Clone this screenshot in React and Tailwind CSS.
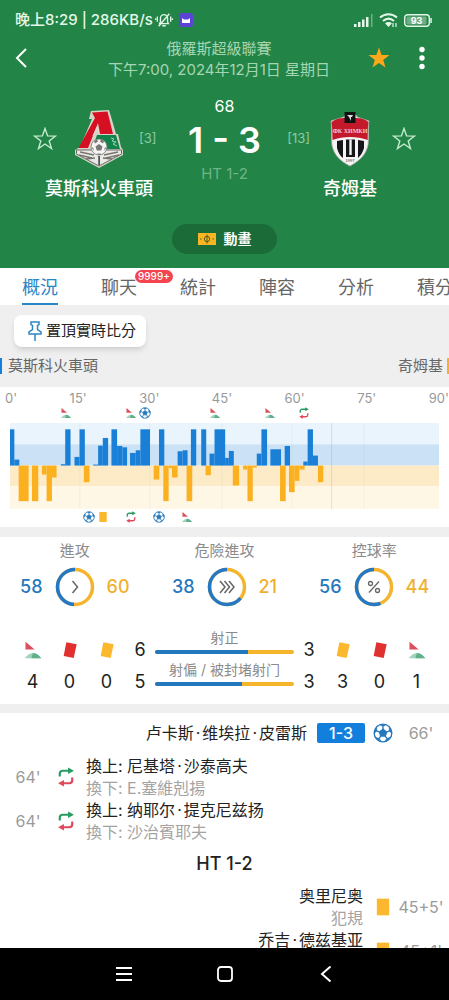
import React from "react";

// bar = [x, width, height], positive heights are the home side
const momentum = [
  [0, 13, 109], [13, 15, 18], [153, 13, 4], [166, 16, 109], [194, 15, 26],
  [209, 16, 109], [250, 15, 3], [265, 14, 60], [279, 16, 83], [305, 17, 109],
  [322, 16, 59], [338, 14, 55], [361, 17, 38], [378, 14, 46], [392, 29, 109],
  [448, 16, 109], [504, 15, 43], [519, 15, 46], [544, 16, 109], [575, 15, 109],
  [600, 15, 36], [615, 32, 109], [647, 11, 23], [658, 15, 44], [742, 14, 36],
  [756, 17, 109], [783, 32, 49], [826, 16, 59], [882, 13, 12], [895, 16, 109],
  [911, 15, 30],
  [26, 30, -107], [66, 19, -107], [96, 14, -27], [110, 16, -107], [126, 14, -36],
  [222, 17, -50], [432, 17, -42], [461, 16, -107], [477, 10, -8], [487, 17, -36],
  [531, 17, -107], [588, 16, -29], [670, 19, -60], [701, 13, -12], [714, 16, -107],
  [730, 12, -6], [812, 17, -107], [839, 17, -80], [856, 14, -46], [870, 16, -12],
  [926, 16, -50],
];

const minutes = ["0'", "15'", "30'", "45'", "60'", "75'", "90'"];

const homeMarks = [
  { at: 13, type: "corner" },
  { at: 28.1, type: "corner" },
  { at: 31.5, type: "goal" },
  { at: 47.7, type: "corner" },
  { at: 60.7, type: "corner" },
  { at: 68.5, type: "sub" },
];

const awayMarks = [
  { at: 18.4, type: "goal" },
  { at: 21.6, type: "yellow" },
  { at: 28.1, type: "sub" },
  { at: 34.8, type: "goal" },
  { at: 41.2, type: "corner" },
];

const tabs = ["概況", "聊天", "統計", "陣容", "分析", "積分"];

const Ball = ({ className }) => (
  <svg viewBox="0 0 24 24" className={className} fill="none" stroke="#2478bd" strokeWidth="1.6">
    <circle cx="12" cy="12" r="10.6" fill="#fff" />
    <path d="M12 7.6l4.3 3.1-1.6 5H9.3l-1.6-5z" fill="#2478bd" />
    <path d="M12 7.6V4.5M16.3 10.7l3-1M14.7 15.7l2 2.7M9.3 15.7l-2 2.7M7.7 10.7l-3-1" />
    <path
      d="M8.4 2.2L12 4.6l3.6-2.4zM19.2 9.6l.4-4.4 3 4.8-.3 2.4zM16.6 18.3l4.2-1-4 3.7-2.6 1zM7.4 18.3l-4.2-1 4 3.7 2.6 1zM4.8 9.6l-.4-4.4-3 4.8.3 2.4z"
      fill="#2478bd"
      strokeWidth="0.5"
    />
  </svg>
);

const Corner = ({ className }) => (
  <svg viewBox="0 0 24 24" className={className}>
    <path d="M3 2l11 9.500H3z" fill="#dd4f5c" />
    <path d="M2 22c3-4 6-6.500 10-6.500S19 18 22 22z" fill="#9fd3bb" />
    <path d="M10 22l2-6.500C16 15.500 19 18 22 22z" fill="#5fb08c" />
  </svg>
);

const Sub = ({ className }) => (
  <svg viewBox="0 0 24 24" className={className} fill="none" strokeWidth="2.600">
    <path d="M4.500 11.500V8c0-2 1.500-3.500 3.500-3.500h8" stroke="#279c62" />
    <path d="M14.500 0.500l7 4-7 4z" fill="#279c62" />
    <path d="M19.500 12.500V16c0 2-1.500 3.500-3.500 3.500H8" stroke="#e0485b" />
    <path d="M9.500 15.500l-7 4 7 4z" fill="#e0485b" />
  </svg>
);

const Card = ({ className, color = "#fbb82f", tilt }) => (
  <svg viewBox="0 0 24 24" className={className}>
    <path d={tilt ? "M7.600 2.800L20 5.200 16.400 21.600 4.400 19.200z" : "M4.600 2h14.800v20H4.600z"} fill={color} />
  </svg>
);

const EventIcon = ({ type, className }) => {
  if (type === "goal") return <Ball className={className} />;
  if (type === "corner") return <Corner className={className} />;
  if (type === "sub") return <Sub className={className} />;
  return <Card className={className} />;
};

const StarIcon = ({ className, filled }) => (
  <svg
    viewBox="0 0 24 24"
    className={className}
    fill={filled ? "#fda71b" : "none"}
    stroke={filled ? "none" : "#c5ebd0"}
    strokeWidth="1.400"
  >
    <path d="M12 1.500l2.600 7.400 7.900.2-6.300 4.800 2.300 7.600L12 17l-6.500 4.500 2.300-7.600L1.500 9.100l7.900-.2z" />
  </svg>
);

const LokomotivCrest = () => (
  <svg viewBox="0 0 48 58" className="h-[58px] w-12">
    <path d="M16 1l18-1 3 10 4 14h2l3 13 2 3v5L24 58 0 45v-5l5-3 12-28h-3z" fill="#d8d3c8" />
    <path d="M1.500 40h45v4L24 56 1.500 44z" fill="#e9e9e6" stroke="#6b6b66" strokeWidth="1" />
    <path d="M5 42l14 3M4 45l13 3M43 42l-14 3M44 45l-13 3M11 49l9-1M37 49l-9-1" stroke="#77736d" strokeWidth="1.300" />
    <path d="M22 25h19l4 14H17z" fill="#11834a" />
    <path d="M36 28l3 1-2 2 4 1-3 2 4 2" stroke="#9fd3b5" strokeWidth="1" fill="none" />
    <path d="M17 2.500L32.500 1.500 38 24H25l-2-11-10 25H3.500L20 8z" fill="#d70f22" />
    <path d="M18 26l4-9 2 6" stroke="#f0d5d5" strokeWidth="1" fill="none" />
    <circle cx="24" cy="37" r="8" fill="#f4f4f2" stroke="#777" strokeWidth="0.800" />
    <path d="M24 34l3.500 2.400-1.300 4h-4.400l-1.300-4zM19 31l3-1.500 1 2-3 2zM29 31l-3-1.500-1 2 3 2zM16.500 37l2 1v3zM31.500 37l-2 1v3zM22 43.500h4l-1 1.300h-2z" fill="#777" />
    <path d="M23.300 46h1.600v9h-1.600z" fill="#444" />
  </svg>
);

const KhimkiCrest = () => (
  <svg viewBox="0 0 40 56" className="h-[56px] w-10">
    <path d="M1 10l13-4 1-2h11l1 2 12 4c-1 6 0 14-1 24-2 10-9 16-18 21C10 50 4 44 2 34 1 24 2 16 1 10z" fill="#f5f3f3" stroke="#b9b3ae" strokeWidth="0.800" />
    <path d="M1.500 11C8 6 14 7 20 7s13-1 18.500 4c-1 6-.500 12-.800 18C27 25 13 25 2.500 29c-.300-6 0-12-1-18z" fill="#c4182b" />
    <path d="M7 30l6-1v18c-3-2-5-6-6-10zM16 28.500h9V46h-9zM28 29l6 1v7c-1 4-3 7-6 10z" fill="#15151a" />
    <path d="M19.300 28.500h2.400V44h-2.400z" fill="#f5f3f3" />
    <path d="M14.500 1h11v11h-11z" fill="#111" />
    <path d="M17 4h6l-1 2h-1v4l-2-4z" fill="#ddd" />
    <text x="20" y="22" textAnchor="middle" fontSize="6" fontFamily="Liberation Serif, serif" fontWeight="700" fill="#f2c9c9">
      ФК ХИМКИ
    </text>
    <text x="20" y="51" textAnchor="middle" fontSize="4" fontFamily="Liberation Sans, sans-serif" fill="#333">
      1997
    </text>
  </svg>
);

const Gauge = ({ title, home, away, share, children }) => (
  <div className="flex flex-col items-center">
    <h3 className="text-[15px] leading-5 text-[#8b8b8b]">{title}</h3>
    <div className="mt-1.5 flex items-center justify-center gap-3 text-lg font-medium">
      <span className="text-[#2478bd]">{home}</span>
      <svg viewBox="0 0 40 40" className="size-10" fill="none">
        <circle cx="20" cy="20" r="17.500" stroke="#f4b42c" strokeWidth="3.500" />
        <circle
          cx="20"
          cy="20"
          r="17.500"
          stroke="#2478c4"
          strokeWidth="3.500"
          pathLength="100"
          strokeDasharray={`${share} 100`}
          transform="translate(40 0) scale(-1 1) rotate(-90 20 20)"
        />
        {children}
      </svg>
      <span className="text-[#f0b030]">{away}</span>
    </div>
  </div>
);

const StatColumn = ({ icon, value }) => (
  <div className="flex w-[37px] flex-col items-center gap-3">
    {icon}
    <span className="text-lg leading-5">{value}</span>
  </div>
);

const ShotBar = ({ label, share }) => (
  <div className="flex h-8 flex-col justify-between pt-0.5 pb-1.5">
    <span className="text-center text-sm leading-4 whitespace-nowrap text-[#8b8b8b]">{label}</span>
    <div className="flex h-1 overflow-hidden rounded-full bg-[#f4b42c]">
      <div className="bg-[#2478bd]" style={{ width: `${share}%` }} />
    </div>
  </div>
);

const PlayerName = ({ name }) =>
  name.split("·").map((part, idx) => (
    <React.Fragment key={idx}>
      {idx > 0 && <span className="mx-0.5">·</span>}
      {part}
    </React.Fragment>
  ));

const EventRow = ({ time, type, title, note, away, score }) => (
  <li className={away ? "flex shrink-0 flex-row-reverse items-center" : "flex shrink-0 items-center"}>
    <span className="w-14 text-center text-base whitespace-nowrap text-[#9b9b9b]">{time}</span>
    <EventIcon type={type} className="size-5 shrink-0" />
    {score && (
      <span className="mr-2 flex h-5 w-12 items-center justify-center rounded-xs bg-[#127fdc] text-base font-medium text-white">
        {score}
      </span>
    )}
    <div className={away ? "mr-2.5 text-right text-base leading-[22px]" : "ml-2.5 text-base leading-[22px]"}>
      <p className="text-[#222]">
        <PlayerName name={title} />
      </p>
      {note && <p className="text-[#a3a3a3]">{note}</p>}
    </div>
  </li>
);

const TimelineMarks = ({ marks }) => (
  <div className="relative h-[18px]">
    {marks.map((mark) => (
      <span key={mark.at} className="absolute top-0.5 -translate-x-1/2" style={{ left: `${mark.at}%` }}>
        <EventIcon type={mark.type} className="size-3" />
      </span>
    ))}
  </div>
);

const Header = () => (
  <header className="shrink-0 bg-[#238447] pb-3.5 text-white">
    <div className="flex h-9 items-center pt-1 pr-[17px] pl-[15px] text-[#e3f8e9]">
      <span className="text-[15px] font-medium">晚上8:29 | 286KB/s</span>
      <svg viewBox="0 0 20 18" className="ml-0.5 h-4 w-[18px]" fill="none" stroke="currentColor" strokeWidth="1.500">
        <path d="M5 13h10l-1-2V7a4 4 0 0 0-8 0v4zM8 15.500h4M4 16L16 2M2.500 5v6M17.500 5v6M.500 7v2M19.500 7v2" />
      </svg>
      <svg viewBox="0 0 14 14" className="ml-1.5 size-3.5">
        <rect width="14" height="14" rx="3" fill="#5a43d6" />
        <path d="M3 5l2 1.500h4L11 5v5H3z" fill="#fff" />
      </svg>
      <div className="ml-auto flex items-center gap-1.5">
        <svg viewBox="0 0 19 13" className="h-[13px] w-[19px]" fill="currentColor">
          <path d="M0 10h2.500v3H0zM4 8h2.500v5H4zM8 5.500h2.500V13H8zM12 3h2.500v10H12z" />
          <path d="M17 0h1.500v13H17z" opacity="0.4" />
        </svg>
        <svg viewBox="0 0 19 14" className="h-3.5 w-[19px]" fill="none" stroke="currentColor" strokeWidth="2">
          <path d="M1 4.500c5-4.500 12-4.500 17 0M4 8c3.500-3 7.500-3 11 0" />
          <path d="M9.500 14L6 10.300c2-1.800 5-1.800 7 0z" fill="currentColor" stroke="none" />
          <path d="M14 10v4M17 10v4" strokeWidth="1.200" />
        </svg>
        <svg viewBox="0 0 28 13" className="h-[13px] w-7">
          <rect x="0.700" y="0.700" width="24.600" height="11.600" rx="3" fill="none" stroke="currentColor" strokeWidth="1.400" />
          <rect x="2.500" y="2.500" width="20" height="8" rx="1" fill="#6fae85" />
          <path d="M26.300 4h1.500v5h-1.500z" fill="currentColor" />
          <text x="12.500" y="10" textAnchor="middle" fontSize="9" fontWeight="700" fill="#fff">93</text>
        </svg>
      </div>
    </div>

    <div className="flex items-center justify-between pr-6 pl-[15px]">
      <button aria-label="返回" className="w-14">
        <svg viewBox="0 0 12 20" className="h-5 w-3" fill="none" stroke="currentColor" strokeWidth="2">
          <path d="M11 1L2 10l9 9" />
        </svg>
      </button>
      <div className="pt-0.5 text-center text-[15px] leading-[21px] whitespace-nowrap text-[#a5d6b4]">
        <p>俄羅斯超級聯賽</p>
        <p>下午7:00, 2024年12月1日 星期日</p>
      </div>
      <div className="flex items-center gap-7">
        <button aria-label="收藏">
          <StarIcon filled className="size-6" />
        </button>
        <button aria-label="更多">
          <svg viewBox="0 0 6 24" className="h-6 w-1.5" fill="currentColor">
            <circle cx="3" cy="3.500" r="2.700" />
            <circle cx="3" cy="12" r="2.700" />
            <circle cx="3" cy="20.500" r="2.700" />
          </svg>
        </button>
      </div>
    </div>

    <div className="mt-4 flex justify-between px-[31px]">
      <div className="grid grid-cols-[28px_48px_28px] content-start items-center justify-items-center gap-x-4 gap-y-[9px] pt-3.5">
        <button aria-label="關注 莫斯科火車頭">
          <StarIcon className="size-6" />
        </button>
        <LokomotivCrest />
        <span className="justify-self-start text-[13px] text-[#8fc9a3]">[3]</span>
        <h2 className="col-span-3 text-lg leading-6 font-medium">莫斯科火車頭</h2>
      </div>
      <div className="-mx-8 flex flex-col items-center whitespace-nowrap">
        <span className="text-base leading-5">68</span>
        <strong className="mt-0.5 text-4xl leading-[44px] font-semibold">1 - 3</strong>
        <span className="mt-0.5 text-[15px] leading-5 text-[#6fb587]">HT 1-2</span>
      </div>
      <div className="grid grid-cols-[28px_48px_28px] content-start items-center justify-items-center gap-x-4 gap-y-[9px] pt-3.5">
        <span className="justify-self-end text-[13px] text-[#8fc9a3]">[13]</span>
        <div className="flex h-[58px] items-center">
          <KhimkiCrest />
        </div>
        <button aria-label="關注 奇姆基">
          <StarIcon className="size-6" />
        </button>
        <h2 className="col-span-3 text-lg leading-6 font-medium">奇姆基</h2>
      </div>
    </div>

    <button className="mx-auto mt-[23px] flex h-[30px] w-[105px] items-center justify-center gap-2 rounded-full bg-[#1b6b38] text-sm font-bold">
      <svg viewBox="0 0 18 12" className="h-3 w-[18px]">
        <rect width="18" height="12" fill="#f9b522" />
        <circle cx="9" cy="6" r="2.700" fill="none" stroke="#5b5a1e" />
        <path d="M9 1.500v9M2 6h1.500M14.500 6H16" fill="none" stroke="#5b5a1e" />
      </svg>
      動畫
    </button>
  </header>
);

export default function App() {
  return (
    <div className="flex h-screen flex-col overflow-hidden bg-white font-['Inter','Noto_Sans_CJK_TC',sans-serif] text-[#222]">
      <Header />

      <nav className="flex shrink-0 gap-[43px] overflow-hidden pl-[22px]">
        {tabs.map((tab, idx) => (
          <a
            key={tab}
            href="#"
            className={
              idx === 0
                ? "relative shrink-0 border-b-2 border-[#2b86c5] pt-1 text-lg leading-[31px] text-[#2b86c5]"
                : "relative shrink-0 pt-1 text-lg leading-[31px] text-[#666]"
            }
          >
            {tab}
            {idx === 1 && (
              <span className="absolute top-0.5 left-[34px] rounded-full bg-[#f4444f] px-[3px] text-[10px] leading-[13px] font-medium text-white">
                9999+
              </span>
            )}
          </a>
        ))}
      </nav>

      <section className="shrink-0 bg-[#efefef] py-2.5">
        <button className="ml-3.5 flex h-8 items-center gap-1 rounded-lg bg-white pr-2.5 pl-3.5 text-[15px] shadow-md">
          <svg viewBox="0 0 14 20" className="h-5 w-3.5" fill="none" stroke="#2b86c5" strokeWidth="1.500">
            <path d="M3 1h8v2.500L9.500 4.500v4L13 11v2H1v-2l3.500-2.500v-4L3 3.500zM7 13v7" />
          </svg>
          置頂實時比分
        </button>
        <div className="mt-2 flex items-center justify-between text-[15px] leading-[22px] text-[#666]">
          <div className="flex items-center gap-1.5">
            <span className="h-4 w-0.5 bg-[#127fdc]" />
            莫斯科火車頭
          </div>
          <div className="flex items-center gap-1">
            奇姆基
            <span className="h-4 w-0.5 bg-[#f6b02a]" />
          </div>
        </div>
      </section>

      <section className="shrink-0 pt-1">
        <div className="flex justify-between pl-[5px] text-[13px] leading-[14px] text-[#999]">
          {minutes.map((minute) => (
            <span key={minute}>{minute}</span>
          ))}
        </div>
        <div className="px-2.5">
          <TimelineMarks marks={homeMarks} />
          <svg viewBox="0 0 1290 258" className="block w-full">
            <rect width="1290" height="64" fill="#e9f4fc" />
            <rect y="64" width="1290" height="64" fill="#cbe2f6" />
            <rect y="128" width="1290" height="62" fill="#fdebc8" />
            <rect y="190" width="1290" height="68" fill="#fff7e6" />
            <path d="M210 0v258M420 0v258M638 0v258M848 0v258M1064 0v258" stroke="#8aa0b0" strokeOpacity="0.1" strokeWidth="3" />
            <path d="M967 0v258" stroke="#7f9fb5" strokeOpacity="0.25" strokeWidth="3" />
            {momentum.map(([x, w, h]) => (
              <rect
                key={`${x}:${h}`}
                x={x}
                y={h > 0 ? 128 - h : 128}
                width={w}
                height={Math.abs(h)}
                fill={h > 0 ? "#1a7fd6" : "#fbb01f"}
              />
            ))}
          </svg>
          <TimelineMarks marks={awayMarks} />
        </div>
      </section>

      <section className="shrink-0 border-t-10 border-b-9 border-[#efefef] pt-1 pb-3">
        <div className="grid grid-cols-3">
          <Gauge title="進攻" home={58} away={60} share={49}>
            <path d="M17.500 14l5 6-5 6" stroke="#666" strokeWidth="1.500" />
          </Gauge>
          <Gauge title="危險進攻" home={38} away={21} share={64}>
            <path d="M13 14l5 6-5 6M17.500 14l5 6-5 6M22 14l5 6-5 6" stroke="#666" strokeWidth="1.500" />
          </Gauge>
          <Gauge title="控球率" home={56} away={44} share={56}>
            <circle cx="16.500" cy="16.500" r="2" stroke="#666" strokeWidth="1.300" />
            <circle cx="23.500" cy="23.500" r="2" stroke="#666" strokeWidth="1.300" />
            <path d="M25 14.500L15 25.500" stroke="#666" strokeWidth="1.300" />
          </Gauge>
        </div>

        <div className="mt-[21px] flex items-end px-3.5">
          <StatColumn icon={<Corner className="size-5" />} value={4} />
          <StatColumn icon={<Card tilt color="#e0302f" className="size-5" />} value={0} />
          <StatColumn icon={<Card tilt className="size-5" />} value={0} />
          <div className="flex w-[30px] flex-col items-center gap-3 text-lg leading-5">
            <span>6</span>
            <span>5</span>
          </div>
          <div className="flex-1">
            <ShotBar label="射正" share={67} />
            <ShotBar label="射偏 / 被封堵射门" share={62.5} />
          </div>
          <div className="flex w-[30px] flex-col items-center gap-3 text-lg leading-5">
            <span>3</span>
            <span>3</span>
          </div>
          <StatColumn icon={<Card tilt className="size-5" />} value={3} />
          <StatColumn icon={<Card tilt color="#e0302f" className="size-5" />} value={0} />
          <StatColumn icon={<Corner className="size-5" />} value={1} />
        </div>
      </section>

      <ul className="flex min-h-0 flex-1 flex-col gap-0 overflow-hidden pt-2">
        <EventRow away time="66'" type="goal" score="1-3" title="卢卡斯·维埃拉·皮雷斯" />
        <li className="h-2.5 shrink-0" aria-hidden="true" />
        <EventRow time="64'" type="sub" title="換上: 尼基塔·沙泰高夫" note="換下: E.塞維剋揚" />
        <EventRow time="64'" type="sub" title="換上: 纳耶尔·提克尼兹扬" note="換下: 沙治賓耶夫" />
        <li className="shrink-0 text-center text-lg leading-[42px] font-medium">HT 1-2</li>
        <EventRow away time="45+5'" type="yellow" title="奥里尼奥" note="犯規" />
        <EventRow away time="45+1'" type="yellow" title="乔吉·德兹基亚" note="犯規" />
      </ul>

      <footer className="flex h-[52px] shrink-0 items-center justify-center bg-black text-white">
        <button aria-label="最近" className="flex w-[101px] justify-center">
          <svg viewBox="0 0 16 16" className="size-4" fill="currentColor">
            <path d="M0 1h16v2H0zM0 7h16v2H0zM0 13h16v2H0z" />
          </svg>
        </button>
        <button aria-label="主頁" className="flex w-[101px] justify-center">
          <svg viewBox="0 0 16 16" className="size-4" fill="none" stroke="currentColor" strokeWidth="1.800">
            <rect x="1" y="1" width="14" height="14" rx="3" />
          </svg>
        </button>
        <button aria-label="返回上頁" className="flex w-[101px] justify-center">
          <svg viewBox="0 0 16 16" className="size-4" fill="none" stroke="currentColor" strokeWidth="2">
            <path d="M12.500 0.500L4 8l8.500 7.500" />
          </svg>
        </button>
      </footer>
    </div>
  );
}
